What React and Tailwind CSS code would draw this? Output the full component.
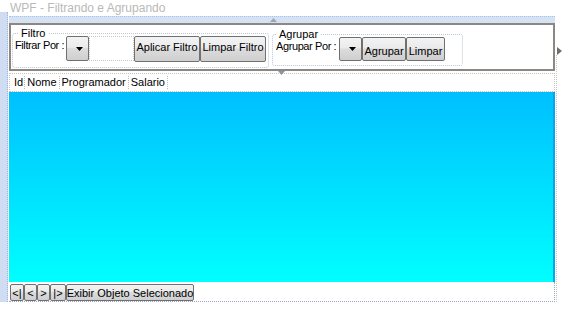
import React from "react";

const face =
  "border border-[#707070] rounded-[2px] bg-[linear-gradient(#f3f3f3_0%,#ebebeb_45%,#dcdcdc_50%,#cfcfcf_100%)] text-black whitespace-nowrap";
const btn = `flex items-start justify-center leading-[14px] ${face}`;

function Combo({ cls }) {
  return (
    <div className={`flex items-center justify-center ${face} ${cls}`}>
      <svg width="7" height="4" viewBox="0 0 7 4" className="ml-[4px]">
        <path d="M0 0H7L3.5 4Z" fill="#000" />
      </svg>
    </div>
  );
}

export default function App() {
  return (
    <div className="w-[564px] h-[311px] bg-white font-['Liberation_Sans',sans-serif] text-[11px] text-black overflow-hidden">
      <div className="h-[16px] pl-[10px] pt-[2px] text-[12px] leading-[13px] text-[#b9b9b9]">
        WPF - Filtrando e Agrupando
      </div>
      <div className="flex h-[286px]">
        <div className="w-[8px] mt-[-4px] bg-[#cfdcf2] border-r border-dotted border-[#9fb6de]" />
        <div className="w-[546px] ml-[1px] flex flex-col">
          <div className="h-[7px] bg-[#d4e2f4] border-t border-dotted border-[#aac3e6] flex justify-center">
            <svg width="7" height="4" viewBox="0 0 7 4" className="mt-[1px] ml-[-18px]">
              <path d="M0 4H7L3.5 0Z" fill="#9aa6b4" />
            </svg>
          </div>
          <div className="h-[48px] border-2 border-[#8d8783] bg-white flex items-start pl-[1px]">
            <fieldset className="w-[257px] h-[41px] mt-[2px] border border-dotted border-[#b7c7d3] rounded-[3px] px-[2px] pb-0 flex items-start">
              <legend className="px-[3px] ml-[3px] leading-[12px]">Filtro</legend>
              <div className="flex items-start w-full mt-[-3px]">
                <div className="w-[51px] pt-[3px] leading-[12px] whitespace-nowrap tracking-[-0.4px] relative z-10">Filtrar Por :</div>
                <Combo cls="w-[23px] h-[25px]" />
                <div className="w-[45px] h-[25px] bg-white border border-dotted border-[#c8c8c8]" />
                <div className={`${btn} w-[66px] h-[26px] pt-[3px]`}>Aplicar Filtro</div>
                <div className={`${btn} w-[66px] h-[26px] pt-[3px]`}>Limpar Filtro</div>
              </div>
            </fieldset>
            <div className="w-[3px]" />
            <fieldset className="w-[191px] h-[38px] mt-[3px] border border-dotted border-[#b7c7d3] rounded-[3px] px-[3px] pb-0">
              <legend className="px-[2px] ml-[1px] leading-[12px]">Agrupar</legend>
              <div className="flex items-start w-full mt-[-3px]">
                <div className="w-[63px] pt-[3px] leading-[12px] whitespace-nowrap tracking-[-0.4px] relative z-10">Agrupar Por :</div>
                <Combo cls="w-[23px] h-[24px]" />
                <div className={`${btn} w-[44px] h-[24px] pt-[6px]`}>Agrupar</div>
                <div className={`${btn} w-[39px] h-[24px] pt-[6px]`}>Limpar</div>
              </div>
            </fieldset>
          </div>
          <div className="h-[2px] relative">
            <svg width="7" height="4" viewBox="0 0 7 4" className="absolute top-0 left-[269px]">
              <path d="M0 0H7L3.5 4Z" fill="#8a96a4" />
            </svg>
          </div>
          <div className="h-[19px] bg-white border border-dotted border-[#c4c4c4] flex items-center pl-[3px] leading-[13px]">
            <span className="px-[1px] border-r border-dotted border-[#bbb]">Id</span>
            <span className="px-[2px] border-r border-dotted border-[#bbb]">Nome</span>
            <span className="px-[2px] border-r border-dotted border-[#bbb]">Programador</span>
            <span className="px-[2px] border-r border-dotted border-[#bbb]">Salario</span>
          </div>
          <div className="flex-1 bg-[linear-gradient(#00bfff,#00ffff)] border-r-2 border-[#0aa4ea]" />
          <div className="h-[20px] bg-white border-r border-b border-dotted border-[#9aa6c8] flex items-start pt-[2px] pl-[1px] leading-[14px]">
            <div className={`${btn} w-[14px] h-[17px] pt-[1px]`}>&lt;|</div>
            <div className={`${btn} w-[13px] h-[17px] pt-[1px]`}>&lt;</div>
            <div className={`${btn} w-[13px] h-[17px] pt-[1px]`}>&gt;</div>
            <div className={`${btn} w-[16px] h-[17px] pt-[1px]`}>|&gt;</div>
            <div className={`${btn} w-[128px] h-[17px] pt-[1px]`}>Exibir Objeto Selecionado</div>
          </div>
        </div>
        <div className="w-[9px] flex flex-col">
          <div className="h-[31px]" />
          <svg width="5" height="8" viewBox="0 0 5 8" className="ml-[2px]">
            <path d="M0 0V8L5 4Z" fill="#6e6e6e" />
          </svg>
          <div className="flex-1 border-l border-dotted border-[#c8c8c8] ml-[1px]" />
        </div>
      </div>
    </div>
  );
}
